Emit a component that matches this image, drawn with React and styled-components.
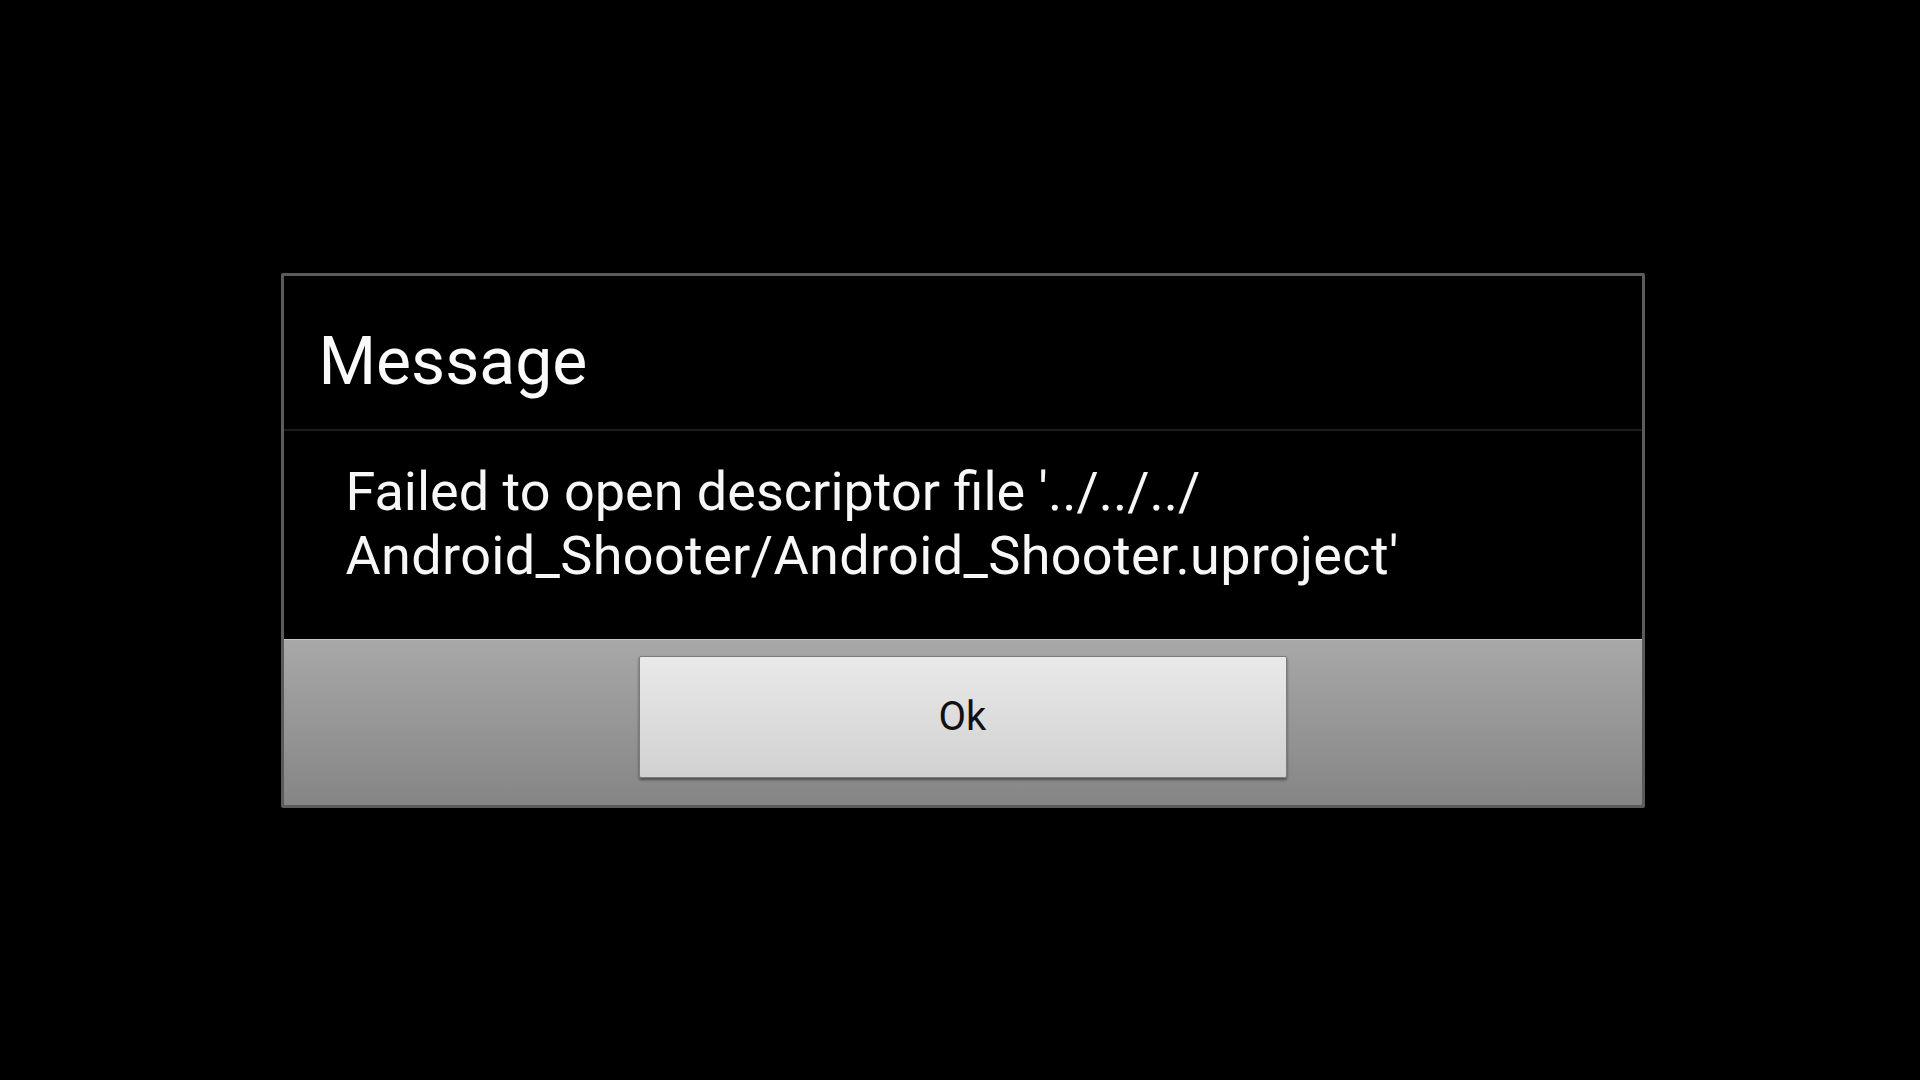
import React from "react";
import styled, { createGlobalStyle } from "styled-components";

const GlobalStyle = createGlobalStyle`
  html, body {
    margin: 0;
    padding: 0;
    background: #000;
  }
  body {
    font-family: Roboto, "Noto Sans", "Liberation Sans", sans-serif;
  }
`;

const Screen = styled.div`
  width: 100%;
  height: 100vh;
  display: flex;
  align-items: center;
  justify-content: center;
  padding-left: 5px;
  box-sizing: border-box;
  background: #000;
`;

const Dialog = styled.div`
  width: 1364px;
  box-sizing: border-box;
  border: 3px solid #5b5b5b;
  border-radius: 2px;
  background: #000;
  display: flex;
  flex-direction: column;
`;

const Header = styled.div`
  height: 155px;
  box-sizing: border-box;
  padding: 46px 0 0 35px;
  border-bottom: 2px solid #1c1c1c;
`;

const Title = styled.h1`
  margin: 0;
  font-size: 66px;
  line-height: 80px;
  font-weight: 400;
  color: #fafafa;
`;

const Body = styled.div`
  padding: 29px 40px 51px 62px;
`;

const MessageText = styled.p`
  margin: 0;
  font-size: 54px;
  line-height: 64px;
  font-weight: 400;
  color: #f7f7f7;
`;

// the project path renders a touch wider than the sentence above it
const FilePath = styled.span`
  letter-spacing: 0.35px;
`;

const Footer = styled.div`
  height: 166px;
  box-sizing: border-box;
  padding-top: 16px;
  border-top: 1px solid #c6c6c6;
  background: linear-gradient(#a8a8a8, #858585);
  display: flex;
  justify-content: center;
  align-items: flex-start;
`;

const Button = styled.button`
  width: 648px;
  height: 122px;
  border: 1px solid #7c7c7c;
  border-radius: 2px;
  background: linear-gradient(#e9e9e9, #d1d1d1);
  box-shadow: 0 2px 3px rgba(0, 0, 0, 0.45);
  font-family: Roboto, "Noto Sans", sans-serif;
  font-size: 40px;
  color: #111;
  display: flex;
  align-items: center;
  justify-content: center;
  cursor: pointer;
`;

export default function App() {
  return (
    <>
      <GlobalStyle />
      <Screen>
        <Dialog>
          <Header>
            <Title>Message</Title>
          </Header>
          <Body>
            <MessageText>
              Failed to open descriptor file '../../../
              <br />
              <FilePath>Android_Shooter/Android_Shooter.uproject'</FilePath>
            </MessageText>
          </Body>
          <Footer>
            <Button>Ok</Button>
          </Footer>
        </Dialog>
      </Screen>
    </>
  );
}
